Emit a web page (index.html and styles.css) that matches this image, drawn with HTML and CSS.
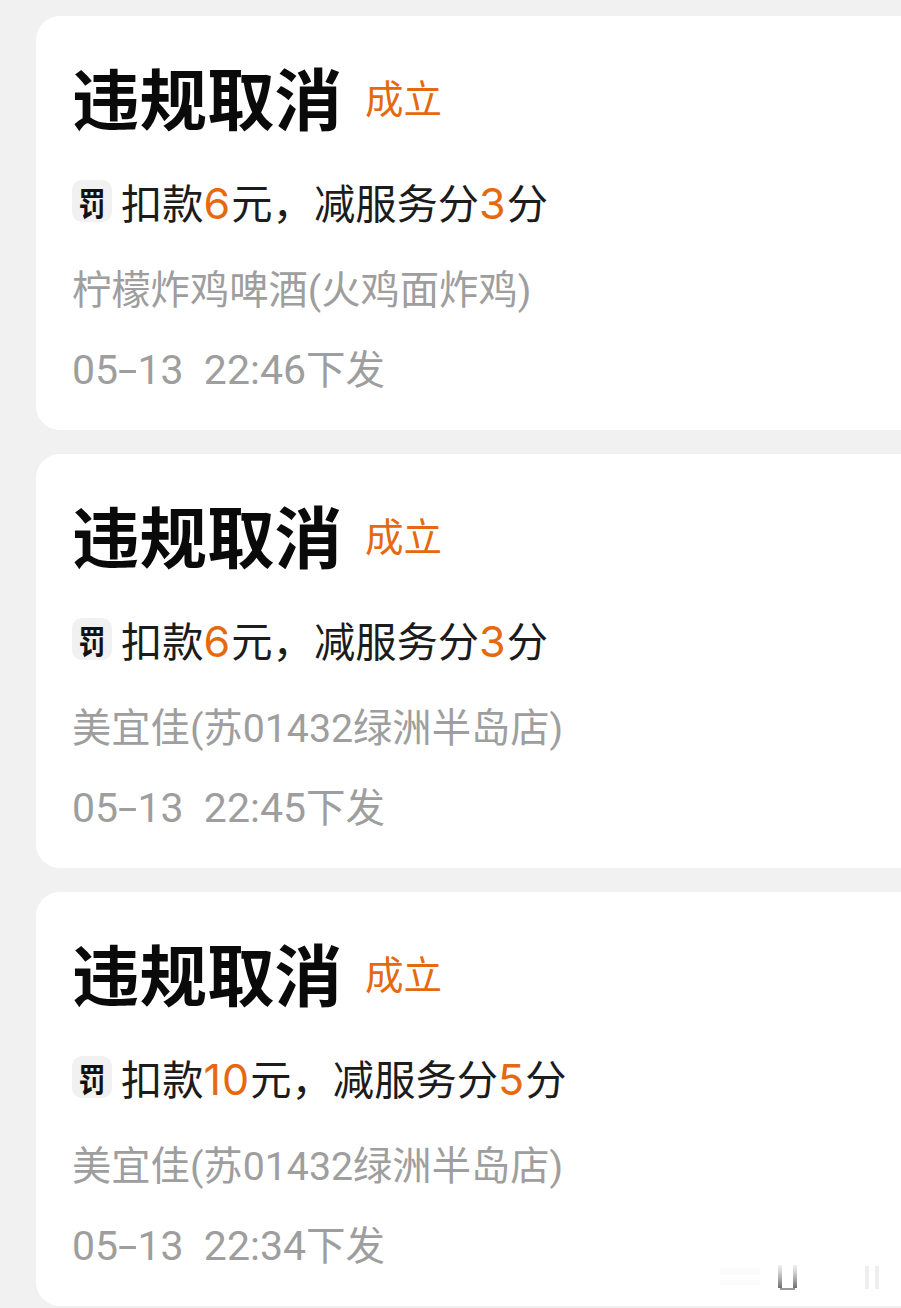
FILE: index.html
```html
<!DOCTYPE html>
<html lang="zh-CN">
<head>
<meta charset="utf-8">
<title>违规取消</title>
<link rel="stylesheet" href="styles.css">
</head>
<body>
<main class="list">
  <section class="card">
    <div class="head"><h2 class="title">违规取消</h2><span class="tag">成立</span></div>
    <div class="fine"><span class="badge"><span class="badge-glyph">罚</span></span><span>扣款<em>6</em>元，减服务分<em>3</em>分</span></div>
    <div class="store">柠檬炸鸡啤酒(火鸡面炸鸡)</div>
    <div class="time">05<span class="dash">-</span>13&nbsp;&nbsp;22:46<span class="suffix">下发</span></div>
  </section>
  <section class="card">
    <div class="head"><h2 class="title">违规取消</h2><span class="tag">成立</span></div>
    <div class="fine"><span class="badge"><span class="badge-glyph">罚</span></span><span>扣款<em>6</em>元，减服务分<em>3</em>分</span></div>
    <div class="store">美宜佳(苏01432绿洲半岛店)</div>
    <div class="time">05<span class="dash">-</span>13&nbsp;&nbsp;22:45<span class="suffix">下发</span></div>
  </section>
  <section class="card">
    <div class="head"><h2 class="title">违规取消</h2><span class="tag">成立</span></div>
    <div class="fine"><span class="badge"><span class="badge-glyph">罚</span></span><span>扣款<em>10</em>元，减服务分<em>5</em>分</span></div>
    <div class="store">美宜佳(苏01432绿洲半岛店)</div>
    <div class="time">05<span class="dash">-</span>13&nbsp;&nbsp;22:34<span class="suffix">下发</span></div>
  </section>
</main>
<svg class="mark" width="180" height="40" viewBox="0 0 180 40" aria-hidden="true">
  <defs>
    <linearGradient id="fade" gradientUnits="userSpaceOnUse" x1="0" y1="2" x2="0" y2="26">
      <stop offset="0" stop-color="#999" stop-opacity=".15"/>
      <stop offset="1" stop-color="#666"/>
    </linearGradient>
  </defs>
  <path class="mark-blur" d="M3 5H43V12H3ZM3 17H43V22H3Z"/>
  <path class="mark-main" stroke="url(#fade)" d="M63 2V25M78 2V25"/>
  <path class="mark-base" d="M63 26H78"/>
  <path class="mark-faint" d="M150 3V26M160 3V26"/>
</svg>
</body>
</html>
```
FILE: styles.css
```css
* { box-sizing: border-box; }
html, body { margin: 0; }
body {
  width: 901px;
  height: 1308px;
  overflow: hidden;
  position: relative;
  background: #f1f1f1;
  font-family: "Roboto", "Noto Sans CJK SC", sans-serif;
}
.list {
  display: flex;
  flex-direction: column;
  gap: 24px;
  padding: 16px 0 0 36px;
}
.card {
  height: 414px;
  background: #fff;
  border-radius: 24px 0 0 24px;
  padding: 44px 0 0 36px;
}
.head {
  display: flex;
  align-items: center;
  gap: 23px;
  height: 72px;
}
.title {
  margin: 0;
  font-family: "Noto Sans CJK SC", sans-serif;
  font-size: 67.5px;
  line-height: 72px;
  font-weight: 700;
  color: #0a0a0a;
}
.tag {
  font-family: "Noto Sans CJK SC", sans-serif;
  font-size: 38.5px;
  line-height: 72px;
  color: #e5690f;
}
.fine {
  display: flex;
  align-items: center;
  gap: 9px;
  margin-top: 47px;
  height: 48px;
  font-family: "Inter", "Noto Sans CJK SC", sans-serif;
  font-size: 41.3px;
  line-height: 48px;
  color: #1c1c1c;
}
.fine em {
  font-style: normal;
  font-weight: 400;
  font-size: 43px;
  letter-spacing: 1px;
  color: #e5690f;
}
.badge {
  flex: none;
  width: 40px;
  height: 42px;
  margin-bottom: 4px;
  border-radius: 10px;
  background: #f1f1f1;
  display: flex;
  align-items: center;
  justify-content: center;
  font-family: "Noto Sans CJK SC", sans-serif;
  font-size: 27px;
  line-height: 1;
  font-weight: 700;
  color: #111;
}
.badge-glyph {
  display: block;
  transform: scaleY(1.22);
}
.store {
  margin-top: 40px;
  height: 48px;
  font-size: 39.3px;
  line-height: 48px;
  color: #9e9e9e;
  white-space: nowrap;
}
.time {
  margin-top: 31px;
  height: 48px;
  font-size: 41px;
  line-height: 48px;
  color: #9e9e9e;
  white-space: nowrap;
}
.dash {
  display: inline-block;
  margin: 0 4px;
  transform: scaleX(1.7);
}
.suffix {
  font-size: 39.5px;
}
.mark {
  position: absolute;
  left: 717px;
  top: 1263px;
}
.mark-main, .mark-base, .mark-faint { fill: none; }
.mark-main { stroke-width: 4; }
.mark-base { stroke: #333; stroke-width: 1; }
.mark-faint { stroke: #eeeeee; stroke-width: 4; }
.mark-blur { fill: #fbfbfb; }
```
